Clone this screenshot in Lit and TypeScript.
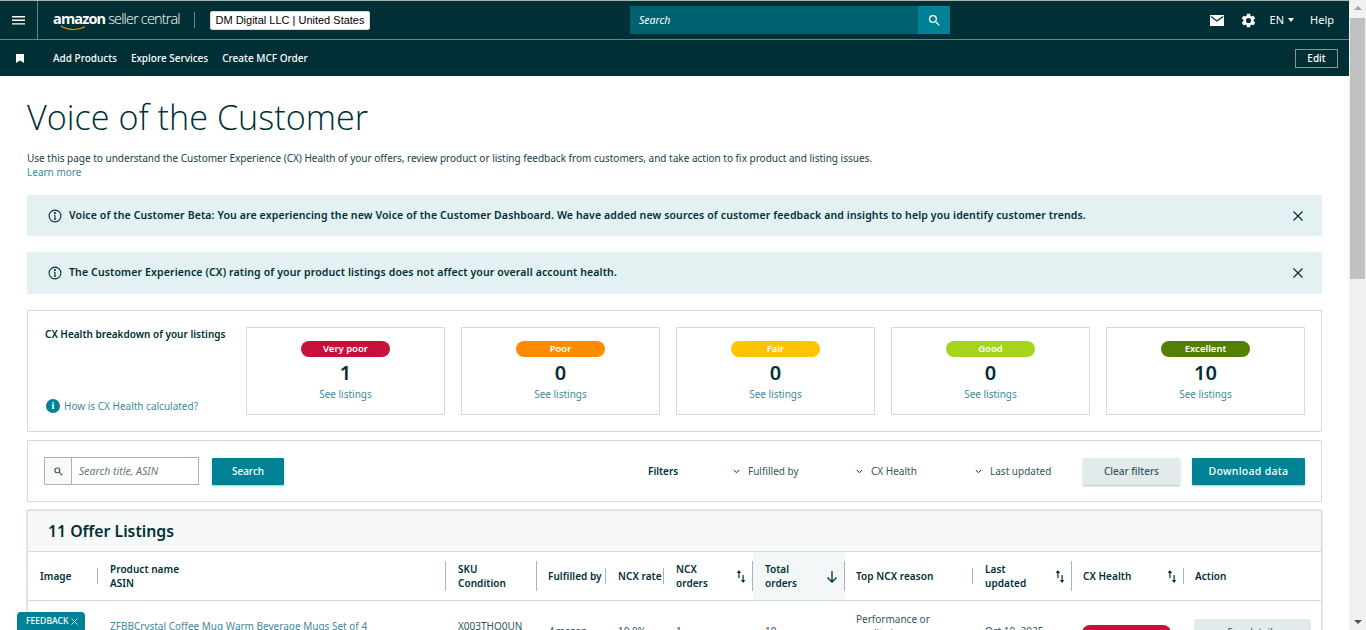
import { LitElement, html, css, svg } from "lit";
import { customElement } from "lit/decorators.js";

const searchPath = "M15.5 14h-.79l-.28-.27A6.47 6.47 0 0 0 16 9.5 6.5 6.5 0 1 0 9.5 16c1.61 0 3.09-.59 4.23-1.57l.27.28v.79l5 4.99L20.49 19l-4.99-5zm-6 0C7.01 14 5 11.99 5 9.5S7.01 5 9.5 5 14 7.01 14 9.5 11.99 14 9.5 14z";
const gearPath = "M19.14 12.94c.04-.3.06-.61.06-.94s-.02-.64-.07-.94l2.03-1.58a.49.49 0 0 0 .12-.61l-1.92-3.32a.49.49 0 0 0-.59-.22l-2.39.96a7 7 0 0 0-1.62-.94l-.36-2.54a.48.48 0 0 0-.48-.41h-3.84a.48.48 0 0 0-.47.41l-.36 2.54c-.59.24-1.13.57-1.62.94l-2.39-.96a.49.49 0 0 0-.59.22L2.74 8.87a.48.48 0 0 0 .12.61l2.03 1.58c-.05.3-.09.63-.09.94s.02.64.07.94l-2.03 1.58a.49.49 0 0 0-.12.61l1.92 3.32c.12.22.37.29.59.22l2.39-.96c.5.38 1.03.7 1.62.94l.36 2.54c.05.24.24.41.48.41h3.84c.24 0 .44-.17.47-.41l.36-2.54c.59-.24 1.13-.56 1.62-.94l2.39.96c.22.08.47 0 .59-.22l1.92-3.32a.49.49 0 0 0-.12-.61l-2.01-1.58zM12 15.6A3.6 3.6 0 1 1 12 8.4a3.6 3.6 0 0 1 0 7.2z";

const icon = (path: string, size: number, fill = "currentColor") => html`<svg width=${size} height=${size} viewBox="0 0 24 24" fill=${fill}>${svg`<path d=${path}></path>`}</svg>`;

const infoIcon = html`<svg width="14" height="14" viewBox="0 0 14 14" fill="none" stroke="#002f36" stroke-width="1.1">
  <circle cx="7" cy="7" r="5.9"></circle><path d="M7 6.2v4M5.9 10.2h2.2M5.9 6.2H7"></path><circle cx="6.9" cy="4" r=".5" fill="#002f36"></circle>
</svg>`;

const closeIcon = html`<svg width="12" height="12" viewBox="0 0 12 12" stroke="#002f36" stroke-width="1.2" fill="none"><path d="M1.5 1.5l9 9M10.5 1.5l-9 9"></path></svg>`;

const sortIcon = html`<svg width="10" height="13" viewBox="0 0 10 13" fill="#002f36">
  <path d="M2.3 8V2.5h1.2V8zM2.9 0l2.2 3H.7zM6.5 5h1.2v5.5H6.5zM7.1 13L4.9 10h4.4z"></path>
</svg>`;

const chevron = html`<svg width="7" height="5" viewBox="0 0 7 5" fill="none" stroke="#002f36" stroke-width="1"><path d="M.8 1l2.7 2.7L6.2 1"></path></svg>`;

const breakdown = [
  { label: "Very poor", count: 1, color: "#c7103c" },
  { label: "Poor", count: 0, color: "#ff8c00" },
  { label: "Fair", count: 0, color: "#ffc400" },
  { label: "Good", count: 0, color: "#a5d41e" },
  { label: "Excellent", count: 10, color: "#538000" },
];

interface Col { lines: string[]; width: number; pad: number; sep: "short" | "tall" | "none"; sort?: boolean; active?: boolean }

const columns: Col[] = [
  { lines: ["Image"], width: 70, pad: 12, sep: "short" },
  { lines: ["Product name", "ASIN"], width: 348, pad: 12, sep: "tall" },
  { lines: ["SKU", "Condition"], width: 91, pad: 12, sep: "tall" },
  { lines: ["Fulfilled by"], width: 69, pad: 11, sep: "short" },
  { lines: ["NCX rate"], width: 58, pad: 12, sep: "short" },
  { lines: ["NCX", "orders"], width: 89, pad: 12, sep: "tall", sort: true },
  { lines: ["Total", "orders"], width: 92, pad: 12, sep: "tall", active: true },
  { lines: ["Top NCX reason"], width: 128, pad: 11, sep: "short" },
  { lines: ["Last", "updated"], width: 99, pad: 12, sep: "tall", sort: true },
  { lines: ["CX Health"], width: 112, pad: 11, sep: "short", sort: true },
  { lines: ["Action"], width: 139, pad: 11, sep: "none" },
];

@customElement("app-root")
export class AppRoot extends LitElement {
  static styles = css`
    :host {
      display: block;
      height: 630px;
      overflow: hidden;
      font-family: "Noto Sans", "Open Sans", sans-serif;
      font-size: 10px;
      color: #002f36;
    }
    .screen { display: flex; height: 630px; position: relative; overflow: hidden; }
    .page { width: 1349px; flex: none; }

    .scrollbar { width: 17px; flex: none; background: #f1f1f1; display: flex; flex-direction: column; align-items: center; }
    .arrow-up { margin-top: 6px; border: 4px solid transparent; border-top: 0; border-bottom: 4px solid #a3a3a3; }
    .thumb { width: 15px; height: 261px; margin-top: 8px; background: #c1c1c1; }
    .arrow-down { margin-top: auto; margin-bottom: 6px; border: 4px solid transparent; border-bottom: 0; border-top: 4px solid #505050; }

    .topbar { height: 38px; border-top: 1px solid #a9b8ae; background: #002f36; border-bottom: 1px solid #6c8386; display: flex; align-items: center; color: #fff; }
    .burger { width: 38px; height: 38px; box-sizing: border-box; border-right: 1px solid #6c8386; display: flex; align-items: center; justify-content: center; flex: none; }
    .burger svg { display: block; }
    .logo { margin-left: 15px; width: 127px; flex: none; display: flex; flex-direction: column; position: relative; height: 20px; }
    .logo-text { font-family: "Open Sans", sans-serif; font-size: 14.5px; line-height: 18px; letter-spacing: -0.85px; white-space: nowrap; font-weight: 300; }
    .logo-text b { font-weight: 700; }
    .smile { position: absolute; left: 7px; top: 15px; }
    .logo-sep { width: 1px; height: 16px; background: #6c8386; margin-left: 14px; flex: none; }
    .account { margin-left: 15px; width: 160px; height: 19px; box-sizing: border-box; background: #fff; border: 1px solid #d5dbdb; border-radius: 2px; color: #000; font-family: "Liberation Sans", Arial, sans-serif; font-size: 11px; display: flex; align-items: center; justify-content: center; flex: none; white-space: nowrap; }
    .search { margin-left: 260px; width: 320px; height: 28px; display: flex; flex: none; }
    .search-field { flex: 1; background: #00626f; font-style: italic; font-size: 10.5px; display: flex; align-items: center; padding-left: 9px; }
    .search-btn { width: 32px; background: #008296; display: flex; align-items: center; justify-content: center; }
    .tools { margin-left: auto; display: flex; align-items: center; padding-right: 15px; font-size: 11px; }
    .tools svg { display: block; }
    .mail { margin-right: 16px; }
    .gear { margin-right: 13px; }
    .lang { display: flex; align-items: center; gap: 4px; margin-right: 16px; padding-bottom: 1px; }
    .help { padding-bottom: 1px; }
    .caret { border: 3.5px solid transparent; border-bottom: 0; border-top: 4px solid #fff; }

    .subbar { height: 36px; background: #002f36; display: flex; align-items: center; color: #fff; font-weight: 500; }
    .bookmark { margin-left: 16px; width: 37px; flex: none; }
    .bookmark svg { display: block; }
    .quick { display: flex; gap: 14px; }
    .edit { margin-left: auto; margin-right: 11px; width: 43px; height: 19px; box-sizing: border-box; border: 1px solid #879596; display: flex; align-items: center; justify-content: center; }

    .content { padding: 0 27px; }
    h1 { margin: 0; padding-top: 18px; font-family: "Open Sans", sans-serif; font-size: 34.2px; line-height: 46px; font-weight: 300; color: #002f36; }
    .intro { margin: 11px 0 0; line-height: 14px; color: #16404a; }
    a { color: #3f8a9c; text-decoration: none; }
    .alert { height: 41px; margin-top: 16px; background: #e3f1f2; display: flex; align-items: center; padding: 0 18px 0 21px; font-size: 10.5px; font-weight: 600; letter-spacing: 0.13px; gap: 7px; }
    .alert svg { display: block; flex: none; }
    .alert span { flex: 1; padding-bottom: 1px; }
    .alert + .alert { height: 42px; padding-bottom: 1px; box-sizing: border-box; }

    .health { margin-top: 16px; height: 122px; box-sizing: border-box; border: 1px solid #d5dbdb; padding: 16px 16px 16px 17px; display: flex; gap: 16px; }
    .health-side { width: 185px; display: flex; flex-direction: column; justify-content: space-between; flex: none; }
    .health-side strong { font-weight: 600; white-space: nowrap; line-height: 14px; }
    .calc { display: flex; align-items: center; gap: 4px; margin-bottom: 2px; margin-left: 1px; }
    .calc-dot { width: 14px; height: 14px; border-radius: 50%; background: #008296; color: #fff; font: 700 10px/14px "Liberation Serif", serif; text-align: center; }
    .tile { flex: 1; border: 1px solid #d5dbdb; display: flex; flex-direction: column; align-items: center; padding-top: 13px; box-sizing: border-box; }
    .pill { width: 89px; height: 16px; border-radius: 8px; color: #fff; font-size: 9.5px; font-weight: 600; line-height: 16px; text-align: center; }
    .count { font-size: 20px; font-weight: 600; line-height: 24px; margin-top: 4px; }
    .see { margin-top: 2px; line-height: 14px; }

    .filters { margin-top: 8px; height: 62px; box-sizing: border-box; border: 1px solid #d5dbdb; padding: 0 16px; display: flex; align-items: center; }
    .input { width: 155px; height: 28px; box-sizing: border-box; border: 1px solid #a6b5b7; display: flex; flex: none; }
    .input-icon { width: 26px; background: #f8f9f9; border-right: 1px solid #a6b5b7; display: flex; align-items: center; justify-content: center; flex: none; }
    .input-text { padding-left: 7px; font-style: italic; color: #66787c; display: flex; align-items: center; font-size: 10.5px; }
    .btn { height: 27px; box-sizing: border-box; background: #008296; color: #fff; display: flex; align-items: center; justify-content: center; border-radius: 1px; box-shadow: 0 1px 2px rgba(0, 47, 54, 0.3); flex: none; font-weight: 500; }
    .btn-search { width: 72px; margin-left: 13px; }
    .filter-label { margin-left: 364px; width: 85px; font-weight: 600; flex: none; padding-bottom: 1px; }
    .filter { display: flex; align-items: center; gap: 8px; flex: none; color: #33555c; }
    .filter-a { width: 123px; }
    .filter-b { width: 119px; }
    .filter-c { width: 108px; }
    .btn-clear { width: 97px; background: #e3eaeb; color: #33555c; }
    .btn-download { width: 113px; margin-left: 12px; font-size: 10.5px; letter-spacing: 0.3px; }

    .table-card { margin-top: 8px; border: 1px solid #d5dbdb; box-shadow: 0 0 2px rgba(0, 47, 54, 0.25); }
    .table-title { height: 41px; box-sizing: border-box; background: #f7f8f8; border-bottom: 1px solid #d5dbdb; padding-left: 20px; display: flex; align-items: center; font-size: 15.8px; font-weight: 600; }
    .thead, .trow { display: flex; }
    .thead { height: 49px; box-sizing: border-box; border-bottom: 1px solid #d5dbdb; }
    .th { display: flex; align-items: center; flex: none; box-sizing: border-box; font-weight: 600; letter-spacing: 0.05px; line-height: 14px; white-space: nowrap; }
    .th.active { background: #f3f7f8; }
    .th-label { flex: 1; }
    .th-sort { display: flex; margin-right: 6px; }
    .th svg { display: block; }
    .sep { width: 1px; background: #a6b5b7; flex: none; }
    .sep.short { height: 16px; }
    .sep.tall { height: 30px; }
    .td { flex: none; box-sizing: border-box; padding: 18px 0 0 12px; line-height: 14px; white-space: nowrap; color: #33555c; }
    .td.reason { padding: 11px 0 0 11px; }
    .td.date { padding-top: 23px; }
    .td.badge { padding: 24px 0 0 10px; }
    .td.badge .pill { background: #c7103c; }
    .td.action { padding-top: 0; }
    .details { width: 117px; height: 30px; background: #e3eaeb; border-radius: 2px; margin-top: 18px; margin-left: -2px; text-align: center; line-height: 27px; }

    .feedback { position: absolute; left: 17px; top: 612px; width: 68px; height: 18px; box-sizing: border-box; padding-left: 9px; background: #008296; color: #fff; border-radius: 4px 4px 0 0; font-size: 8.6px; font-weight: 500; display: flex; align-items: center; gap: 3px; }
    .feedback svg { display: block; }
  `;

  render() {
    return html`
      <div class="screen">
        <div class="page">
          <div class="topbar">
            <div class="burger">
              <svg width="13" height="9" viewBox="0 0 13 9" fill="#fff"><path d="M0 0h13v1.4H0zM0 3.6h13V5H0zM0 7.2h13v1.4H0z"></path></svg>
            </div>
            <div class="logo">
              <div class="logo-text"><b>amazon</b> seller central</div>
              <svg class="smile" width="28" height="6" viewBox="0 0 28 6" fill="none" stroke="#f90" stroke-width="1.2"><path d="M1 1c7 4.5 17 4.5 24 .8"></path></svg>
            </div>
            <div class="logo-sep"></div>
            <div class="account">DM Digital LLC | United States</div>
            <div class="search">
              <div class="search-field">Search</div>
              <div class="search-btn">${icon(searchPath, 15)}</div>
            </div>
            <div class="tools">
              <svg class="mail" width="14" height="11" viewBox="0 0 14 11"><path d="M0 0h14v11H0z" fill="#fff"></path><path d="M1 1.5l6 4.5 6-4.5" fill="none" stroke="#002f36" stroke-width="1.2"></path></svg>
              <div class="gear">${icon(gearPath, 17)}</div>
              <div class="lang">EN <span class="caret"></span></div>
              <div class="help">Help</div>
            </div>
          </div>
          <div class="subbar">
            <div class="bookmark"><svg width="8" height="9" viewBox="0 0 8 9" fill="#fff"><path d="M0 0h8v9L4 6.6 0 9z"></path></svg></div>
            <div class="quick"><span>Add Products</span><span>Explore Services</span><span>Create MCF Order</span></div>
            <div class="edit">Edit</div>
          </div>
          <div class="content">
            <h1>Voice of the Customer</h1>
            <p class="intro">
              Use this page to understand the Customer Experience (CX) Health of your offers, review product or listing feedback from customers, and take action to fix product and listing issues.<br />
              <a href="#">Learn more</a>
            </p>
            <div class="alert">
              ${infoIcon}
              <span>Voice of the Customer Beta: You are experiencing the new Voice of the Customer Dashboard. We have added new sources of customer feedback and insights to help you identify customer trends.</span>
              ${closeIcon}
            </div>
            <div class="alert">
              ${infoIcon}
              <span>The Customer Experience (CX) rating of your product listings does not affect your overall account health.</span>
              ${closeIcon}
            </div>
            <div class="health">
              <div class="health-side">
                <strong>CX Health breakdown of your listings</strong>
                <div class="calc"><div class="calc-dot">i</div><a href="#">How is CX Health calculated?</a></div>
              </div>
              ${breakdown.map(
                (b) => html`<div class="tile">
                  <div class="pill" style="background:${b.color}">${b.label}</div>
                  <div class="count">${b.count}</div>
                  <a class="see" href="#">See listings</a>
                </div>`
              )}
            </div>
            <div class="filters">
              <div class="input">
                <div class="input-icon">${icon(searchPath, 11)}</div>
                <div class="input-text">Search title, ASIN</div>
              </div>
              <div class="btn btn-search">Search</div>
              <div class="filter-label">Filters</div>
              <div class="filter filter-a">${chevron}<span>Fulfilled by</span></div>
              <div class="filter filter-b">${chevron}<span>CX Health</span></div>
              <div class="filter filter-c">${chevron}<span>Last updated</span></div>
              <div class="btn btn-clear">Clear filters</div>
              <div class="btn btn-download">Download data</div>
            </div>
            <div class="table-card">
              <div class="table-title">11 Offer Listings</div>
              <div class="thead">
                ${columns.map(
                  (c) => html`<div class="th ${c.active ? "active" : ""}" style="width:${c.width}px;padding-left:${c.pad}px">
                    <div class="th-label">${c.lines.map((l) => html`<div>${l}</div>`)}</div>
                    ${c.sort ? html`<div class="th-sort">${sortIcon}</div>` : ""}
                    ${c.active
                      ? html`<svg class="th-sort" width="12" height="13" viewBox="0 0 12 13" fill="none" stroke="#002f36" stroke-width="1.3"><path d="M6 1v11M1.5 7.5L6 12l4.5-4.5"></path></svg>`
                      : ""}
                    ${c.sep !== "none" ? html`<div class="sep ${c.sep}"></div>` : ""}
                  </div>`
                )}
              </div>
              <div class="trow">
                <div class="td" style="width:70px"></div>
                <div class="td" style="width:348px"><a href="#">ZFBBCrystal Coffee Mug Warm Beverage Mugs Set of 4</a></div>
                <div class="td" style="width:91px">X003THO0UN</div>
                <div class="td date" style="width:69px">Amazon</div>
                <div class="td date" style="width:58px">10.0%</div>
                <div class="td date" style="width:89px">1</div>
                <div class="td date" style="width:92px">10</div>
                <div class="td reason" style="width:128px">Performance or<br />quality issues</div>
                <div class="td date" style="width:99px">Oct 10, 2025</div>
                <div class="td badge" style="width:112px"><div class="pill">Very poor</div></div>
                <div class="td action" style="width:139px"><div class="details">See details</div></div>
              </div>
            </div>
          </div>
        </div>
        <div class="scrollbar">
          <div class="arrow-up"></div>
          <div class="thumb"></div>
          <div class="arrow-down"></div>
        </div>
        <div class="feedback">FEEDBACK <svg width="7" height="7" viewBox="0 0 7 7" stroke="#fff" stroke-width=".8" fill="none"><path d="M.5.5l6 6M6.5.5l-6 6"></path></svg></div>
      </div>
    `;
  }
}
